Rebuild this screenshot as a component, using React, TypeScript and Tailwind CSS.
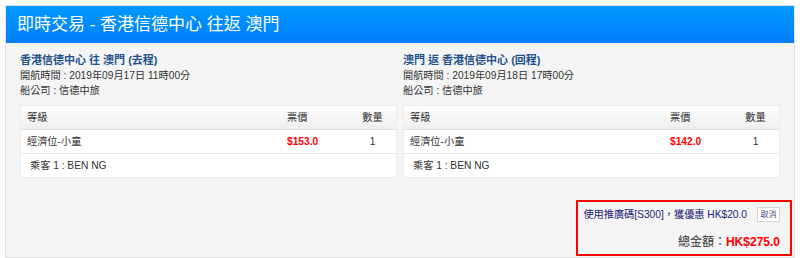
type Trip = {
  title: string;
  time: string;
  company: string;
  seat: string;
  price: string;
  qty: number;
  passenger: string;
};

const trips: Trip[] = [
  {
    title: "香港信德中心 往 澳門 (去程)",
    time: "開航時間 : 2019年09月17日 11時00分",
    company: "船公司 : 信德中旅",
    seat: "經濟位-小童",
    price: "$153.0",
    qty: 1,
    passenger: "乘客 1 : BEN NG",
  },
  {
    title: "澳門 返 香港信德中心 (回程)",
    time: "開航時間 : 2019年09月18日 17時00分",
    company: "船公司 : 信德中旅",
    seat: "經濟位-小童",
    price: "$142.0",
    qty: 1,
    passenger: "乘客 1 : BEN NG",
  },
];

const TripColumn = ({ trip }: { trip: Trip }) => (
  <div>
    <div className="h-[15px] leading-[15px] text-[11px] font-bold text-[#1f528c]">{trip.title}</div>
    <div className="h-[15px] leading-[15px] text-[10.2px] text-[#333]">{trip.time}</div>
    <div className="h-[15px] leading-[15px] text-[10.2px] text-[#333]">{trip.company}</div>

    <div className="mt-[7px] bg-white border border-[#ececec] text-[10.2px] text-[#333]">
      <div className="grid grid-cols-[1fr_62px_47px] h-[24px] items-center border-b border-[#dddddd] bg-linear-to-b from-white to-[#eeeeee]">
        <div className="pl-[6px]">等級</div>
        <div>票價</div>
        <div className="text-center">數量</div>
      </div>
      <div className="grid grid-cols-[1fr_62px_47px] h-[24px] items-center border-b border-[#e6e6e6]">
        <div className="pl-[6px]">{trip.seat}</div>
        <div className="font-bold text-[#ff0000]">{trip.price}</div>
        <div className="text-center">{trip.qty}</div>
      </div>
      <div className="h-[23px] leading-[23px] pl-[9px]">{trip.passenger}</div>
    </div>
  </div>
);

function App() {
  return (
    <div className="min-h-screen bg-white p-[5px] font-['Liberation_Sans','Noto_Sans_CJK_TC',sans-serif]">
      <div className="h-[253px] border border-[#e2e2e2] bg-[#f4f4f4]">
        <header className="h-[37px] flex items-center pl-[11px] bg-linear-to-b from-[#0099ff] to-[#007eff]">
          <h1 className="text-[17px] text-white">即時交易 - 香港信德中心 往返 澳門</h1>
        </header>

        <main className="px-[14px] pt-[10px] grid grid-cols-2 gap-[6px]">
          {trips.map((t) => (
            <TripColumn key={t.title} trip={t} />
          ))}
        </main>

        <div className="mt-[22px] flex justify-end pr-[2px]">
          <div className="w-[216px] border-2 border-[#ff0000] pt-[4px] pb-[4px] pr-[10px]">
            <div className="flex justify-end items-center gap-[10px] h-[17px]">
              <span className="text-[10.2px] text-[#23237a]">使用推廣碼[S300]，獲優惠 HK$20.0</span>
              <button className="h-[15px] w-[23px] bg-white border border-[#d4d4d4] text-[8px] leading-[13px] text-[#4a4a80]">
                取消
              </button>
            </div>
            <div className="mt-[11px] h-[16px] leading-[16px] text-right text-[12px]">
              <span className="text-[#333]">總金額：</span>
              <span className="font-bold text-[#ff0000]">HK$275.0</span>
            </div>
          </div>
        </div>
      </div>
    </div>
  );
}

export default App;
